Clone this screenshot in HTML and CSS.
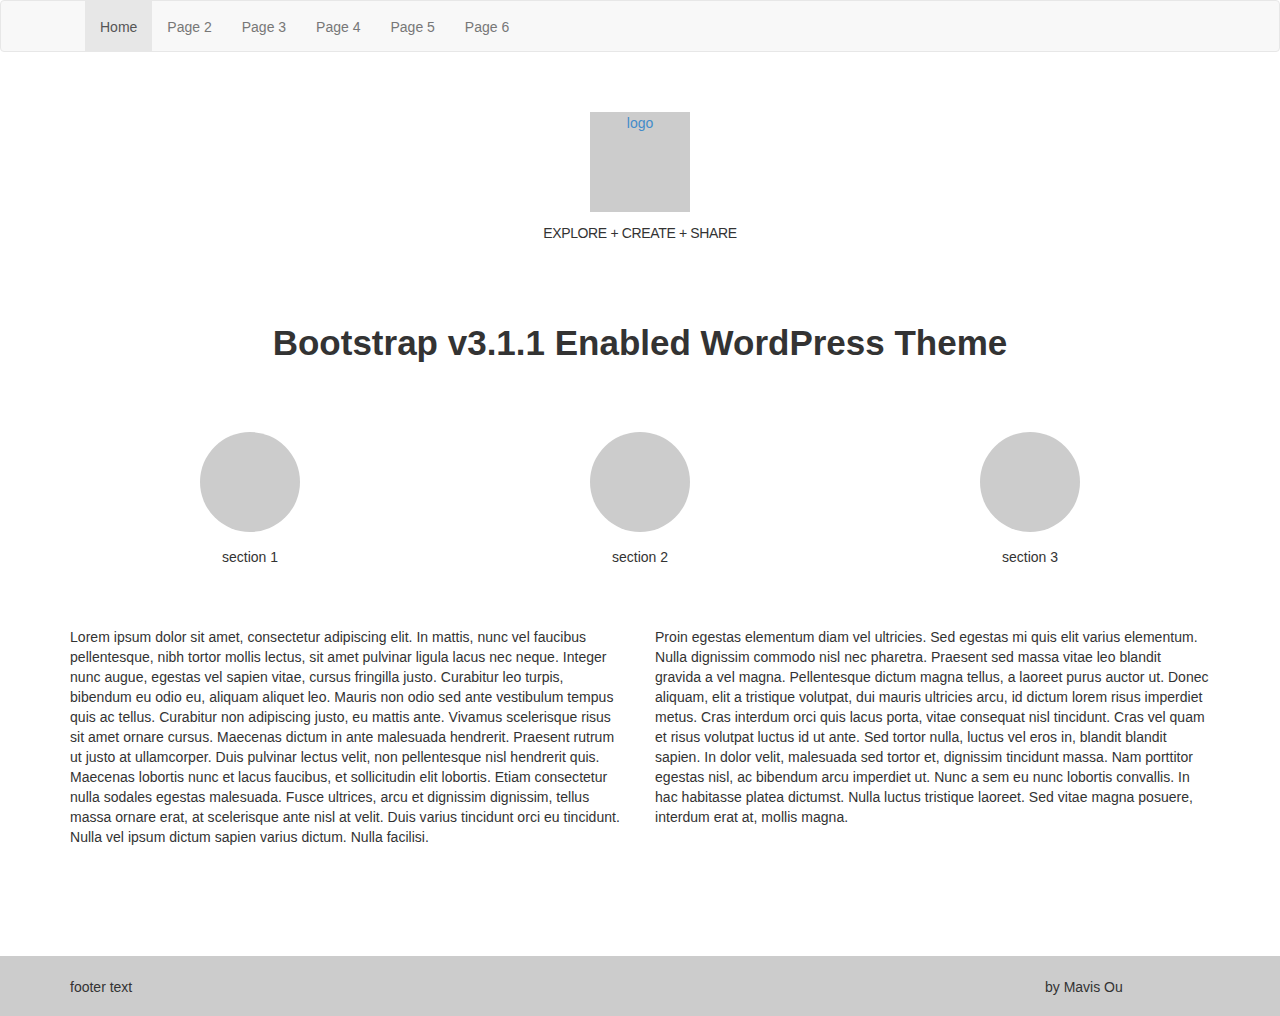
FILE: index.html
```html
<!DOCTYPE html>
<html lang="en">
<head>
<meta charset="utf-8">
<title>Bootstrap v3.1.1 Enabled WordPress Theme</title>
<link rel="stylesheet" href="styles.css">
</head>
<body>
<div class="page">
  <nav class="navbar">
    <div class="container">
      <ul class="nav">
        <li class="active"><a href="#">Home</a></li>
        <li><a href="#">Page 2</a></li>
        <li><a href="#">Page 3</a></li>
        <li><a href="#">Page 4</a></li>
        <li><a href="#">Page 5</a></li>
        <li><a href="#">Page 6</a></li>
      </ul>
    </div>
  </nav>

  <header class="brand">
    <div class="logo"><a href="#">logo</a></div>
    <p class="tagline">EXPLORE + CREATE + SHARE</p>
  </header>

  <main class="container">
    <h1 class="title">Bootstrap v3.1.1 Enabled WordPress Theme</h1>

    <div class="row sections">
      <div class="section-col">
        <div class="circle"></div>
        <p>section 1</p>
      </div>
      <div class="section-col">
        <div class="circle"></div>
        <p>section 2</p>
      </div>
      <div class="section-col">
        <div class="circle"></div>
        <p>section 3</p>
      </div>
    </div>

    <div class="row texts">
      <div class="text-col">
        <p>Lorem ipsum dolor sit amet, consectetur adipiscing elit. In mattis, nunc vel faucibus pellentesque, nibh tortor mollis lectus, sit amet pulvinar ligula lacus nec neque. Integer nunc augue, egestas vel sapien vitae, cursus fringilla justo. Curabitur leo turpis, bibendum eu odio eu, aliquam aliquet leo. Mauris non odio sed ante vestibulum tempus quis ac tellus. Curabitur non adipiscing justo, eu mattis ante. Vivamus scelerisque risus sit amet ornare cursus. Maecenas dictum in ante malesuada hendrerit. Praesent rutrum ut justo at ullamcorper. Duis pulvinar lectus velit, non pellentesque nisl hendrerit quis. Maecenas lobortis nunc et lacus faucibus, et sollicitudin elit lobortis. Etiam consectetur nulla sodales egestas malesuada. Fusce ultrices, arcu et dignissim dignissim, tellus massa ornare erat, at scelerisque ante nisl at velit. Duis varius tincidunt orci eu tincidunt. Nulla vel ipsum dictum sapien varius dictum. Nulla facilisi.</p>
      </div>
      <div class="text-col">
        <p>Proin egestas elementum diam vel ultricies. Sed egestas mi quis elit varius elementum. Nulla dignissim commodo nisl nec pharetra. Praesent sed massa vitae leo blandit gravida a vel magna. Pellentesque dictum magna tellus, a laoreet purus auctor ut. Donec aliquam, elit a tristique volutpat, dui mauris ultricies arcu, id dictum lorem risus imperdiet metus. Cras interdum orci quis lacus porta, vitae consequat nisl tincidunt. Cras vel quam et risus volutpat luctus id ut ante. Sed tortor nulla, luctus vel eros in, blandit blandit sapien. In dolor velit, malesuada sed tortor et, dignissim tincidunt massa. Nam porttitor egestas nisl, ac bibendum arcu imperdiet ut. Nunc a sem eu nunc lobortis convallis. In hac habitasse platea dictumst. Nulla luctus tristique laoreet. Sed vitae magna posuere, interdum erat at, mollis magna.</p>
      </div>
    </div>
  </main>

  <footer class="footer">
    <div class="container footer-row">
      <div class="footer-left">footer text</div>
      <div class="footer-right">by Mavis Ou</div>
    </div>
  </footer>
</div>
</body>
</html>
```

FILE: styles.css
```css
* { box-sizing: border-box; }

html, body { margin: 0; padding: 0; }

body {
  font-family: "Liberation Sans", Arial, sans-serif;
  font-size: 14px;
  line-height: 20px;
  color: #333;
  background: #fff;
}

a { color: #428bca; text-decoration: none; }

p { margin: 0; }

.page {
  min-height: 100vh;
  display: flex;
  flex-direction: column;
}

.container {
  width: 1170px;
  margin: 0 auto;
  padding: 0 15px;
}

/* Navbar */
.navbar {
  background: #f8f8f8;
  border: 1px solid #e7e7e7;
  border-radius: 4px;
  min-height: 52px;
}

.nav {
  list-style: none;
  margin: 0;
  padding: 0 15px;
  display: flex;
}

.nav a {
  display: block;
  padding: 16px 15px 14px;
  line-height: 20px;
  color: #777;
}

.nav .active a {
  background: #e7e7e7;
  color: #555;
}

/* Brand */
.brand {
  margin-top: 60px;
  display: flex;
  flex-direction: column;
  align-items: center;
}

.logo {
  width: 100px;
  height: 100px;
  background: #ccc;
  text-align: center;
}

.logo a { display: block; line-height: 22px; }

.tagline {
  margin-top: 11px;
  text-align: center;
  letter-spacing: -0.35px;
}

/* Title */
.title {
  margin: 80px 0 0;
  text-align: center;
  font-size: 35px;
  font-weight: 700;
  line-height: 40px;
  color: #333;
}

.row {
  display: flex;
  margin: 0 -15px;
}

.sections { margin-top: 69px; }

.section-col {
  flex: 1 1 0;
  padding: 0 15px;
  display: flex;
  flex-direction: column;
  align-items: center;
}

.circle {
  width: 100px;
  height: 100px;
  border-radius: 50%;
  background: #ccc;
}

.section-col p { margin-top: 15px; }

.texts { margin-top: 60px; }

.text-col {
  flex: 1 1 0;
  padding: 0 15px;
  letter-spacing: 0.03px;
}

/* Footer */
.footer {
  margin-top: auto;
  background: #ccc;
  padding: 21px 0 19px;
}

.footer-row {
  display: flex;
}

.footer-left { width: 975px; }
```
